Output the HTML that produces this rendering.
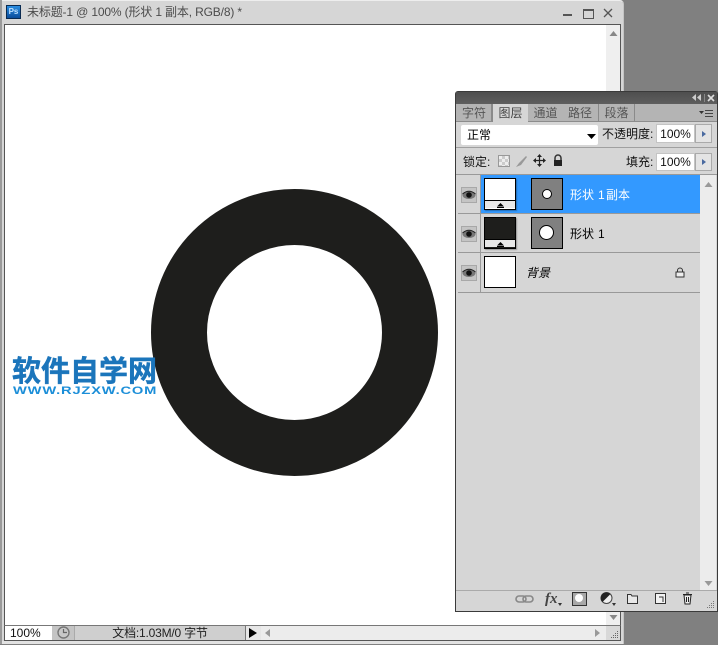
<!DOCTYPE html>
<html>
<head>
<meta charset="utf-8">
<style>
html,body{margin:0;padding:0;width:718px;height:645px;overflow:hidden;background:#808080;}
body{position:relative;font-family:"Liberation Sans","Noto Sans CJK SC",sans-serif;font-size:12px;color:#000;}
.a{position:absolute;white-space:nowrap;}
.sep{position:absolute;background:#a0a0a0;height:1px;}
.tab{position:absolute;top:104px;height:17px;background:#b4b4b4;border-right:1px solid #8a8a8a;color:#555;text-align:center;line-height:18px;font-size:12px;}
.eye{position:absolute;left:461px;width:14px;height:14px;border:1px solid #a8a8a8;background:#c4c4c4;}
.th{box-shadow:1px 1px 1px rgba(0,0,0,.3);}
</style>
</head>
<body>
<!-- Document window -->
<div class="a" style="left:0;top:0;width:624px;height:644px;background:#d6d6d6;border-top:1px solid #eee;border-right:1px solid #c4c4c4;border-radius:0 4px 0 0;box-sizing:border-box;"></div>
<div class="a" style="left:0;top:0;width:2px;height:644px;background:#9a9a9a;"></div>
<div class="a" style="left:2px;top:641px;width:621px;height:3px;background:#e2e2e2;"></div>
<!-- Title -->
<div class="a" style="left:6px;top:5px;width:15px;height:14px;background:linear-gradient(#2a8de0,#0b4d9c);border:1px solid #0a2a50;box-sizing:border-box;color:#bfe0ff;font-size:8px;font-weight:bold;line-height:12px;text-align:center;">Ps</div>
<div class="a" style="left:27px;top:4px;font-size:12px;line-height:16px;color:#4c4c4c;letter-spacing:-.15px;">未标题-1 @ 100% (形状 1 副本, RGB/8) *</div>
<div class="a" style="left:563px;top:14px;width:9px;height:2px;background:#555;"></div>
<div class="a" style="left:583px;top:9px;width:9px;height:7px;border:1px solid #555;border-top:2px solid #555;"></div>
<svg class="a" style="left:603px;top:8px;" width="10" height="10"><path d="M1 1L9 9M9 1L1 9" stroke="#555" stroke-width="1.3" fill="none"/></svg>
<!-- Canvas frame -->
<div class="a" style="left:4px;top:24px;width:617px;height:603px;background:#fff;border-top:1px solid #555;border-left:1px solid #555;border-right:1px solid #555;box-sizing:border-box;"></div>
<!-- scrollbar -->
<div class="a" style="left:606px;top:25px;width:14px;height:601px;background:#efefef;"></div>
<svg class="a" style="left:609px;top:31px;" width="9" height="6"><path d="M4.5 0L8.5 5H0.5Z" fill="#888"/></svg>
<svg class="a" style="left:609px;top:615px;" width="9" height="6"><path d="M0.5 0H8.5L4.5 5Z" fill="#888"/></svg>
<!-- Circle -->
<svg class="a" style="left:0;top:0;" width="620" height="626">
<circle cx="294.5" cy="332.5" r="115.5" fill="none" stroke="#1e1e1c" stroke-width="56"/>
</svg>
<!-- Watermark -->
<div class="a" style="left:12px;top:355px;font-size:29px;line-height:34px;font-weight:bold;color:#1b75bb;-webkit-text-stroke:.5px #1b75bb;">软件自学网</div>
<div class="a" style="left:13px;top:384px;font-size:11px;line-height:14px;font-weight:bold;color:#1b8ed8;letter-spacing:.6px;transform:scaleX(1.335);transform-origin:0 0;">WWW.RJZXW.COM</div>
<!-- Status bar -->
<div class="a" style="left:4px;top:625px;width:617px;height:16px;background:#d4d4d4;border-top:1px solid #777;border-bottom:1px solid #555;border-left:1px solid #555;border-right:1px solid #555;box-sizing:border-box;"></div>
<div class="a" style="left:5px;top:626px;width:47px;height:14px;background:#fff;font-size:12px;line-height:15px;color:#111;padding-left:5px;box-sizing:border-box;">100%</div>
<div class="a" style="left:52px;top:626px;width:22px;height:14px;background:#c4c4c4;"></div>
<svg class="a" style="left:57px;top:626px;" width="13" height="13"><circle cx="6.5" cy="6.5" r="5.5" fill="#c8c8c8" stroke="#777" stroke-width="1.4"/><path d="M6.5 3V6.5H10" fill="none" stroke="#666" stroke-width="1.2"/></svg>
<div class="a" style="left:74px;top:626px;width:172px;height:14px;background:#cfcfcf;border-left:1px solid #aaa;border-right:1px solid #777;box-sizing:border-box;text-align:center;line-height:15px;font-size:12px;color:#222;letter-spacing:-.2px;">文档:1.03M/0 字节</div>
<div class="a" style="left:246px;top:626px;width:15px;height:14px;background:#e6e6e6;"></div>
<svg class="a" style="left:249px;top:628px;" width="9" height="10"><path d="M0 0L8 5L0 10Z" fill="#000"/></svg>
<div class="a" style="left:261px;top:626px;width:345px;height:14px;background:#ececec;"></div>
<svg class="a" style="left:265px;top:629px;" width="6" height="8"><path d="M5 0V8L0 4Z" fill="#999"/></svg>
<svg class="a" style="left:595px;top:629px;" width="6" height="8"><path d="M0 0V8L5 4Z" fill="#999"/></svg>
<div class="a" style="left:606px;top:626px;width:14px;height:14px;background:#d8d8d8;"></div>
<svg class="a" style="left:610px;top:630px;" width="9" height="9" fill="#666"><rect x="7" y="1" width="1" height="1"/><rect x="5" y="3" width="1" height="1"/><rect x="7" y="3" width="1" height="1"/><rect x="3" y="5" width="1" height="1"/><rect x="5" y="5" width="1" height="1"/><rect x="7" y="5" width="1" height="1"/><rect x="1" y="7" width="1" height="1"/><rect x="3" y="7" width="1" height="1"/><rect x="5" y="7" width="1" height="1"/><rect x="7" y="7" width="1" height="1"/></svg>
<!-- Layers panel -->
<div class="a" style="left:455px;top:91px;width:263px;height:521px;background:#d6d6d6;border:1px solid #3a3a3a;border-radius:3px 3px 0 0;box-sizing:border-box;"></div>
<div class="a" style="left:456px;top:92px;width:261px;height:12px;background:linear-gradient(#4e4e4e,#5e5e5e);"></div>
<svg class="a" style="left:692px;top:94px;" width="26" height="9" fill="#ccc"><path d="M4 0V7L0 3.5ZM9 0V7L5 3.5Z"/><rect x="12" y="0" width="1" height="8" fill="#888"/><path d="M16 1L22 7M22 1L16 7" stroke="#ddd" stroke-width="1.6" fill="none"/></svg>
<div class="a" style="left:456px;top:104px;width:261px;height:18px;background:#b4b4b4;border-bottom:1px solid #8c8c8c;box-sizing:border-box;"></div>
<div class="tab" style="left:457px;width:34px;">字符</div>
<div class="tab" style="left:492px;width:35px;background:#d6d6d6;height:18px;border-right:none;border-left:1px solid #8a8a8a;color:#444;">图层</div>
<div class="tab" style="left:528px;width:33px;padding-left:1px;">通道</div>
<div class="tab" style="left:562px;width:36px;">路径</div>
<div class="tab" style="left:599px;width:35px;">段落</div>
<svg class="a" style="left:699px;top:109px;" width="15" height="10"><path d="M0 2H5L2.5 5Z" fill="#333"/><path d="M6 1.5H14M6 4.5H14M6 7.5H14" stroke="#444" stroke-width="1"/></svg>
<!-- blend row -->
<div class="a" style="left:461px;top:125px;width:137px;height:20px;background:#fff;border-radius:2px;font-size:12px;line-height:21px;padding-left:6px;box-sizing:border-box;">正常</div>
<svg class="a" style="left:587px;top:134px;" width="9" height="5"><path d="M0 0H9L4.5 5Z" fill="#000"/></svg>
<div class="a" style="left:602px;top:126px;font-size:12px;line-height:16px;color:#111;">不透明度:</div>
<div class="a" style="left:656px;top:124px;width:39px;height:19px;background:#fff;border:1px solid #c4c4c4;box-sizing:border-box;text-align:center;line-height:18px;font-size:12px;color:#111;">100%</div>
<div class="a" style="left:695px;top:124px;width:17px;height:19px;background:#e4e4e4;border:1px solid #aaa;box-sizing:border-box;"></div>
<svg class="a" style="left:702px;top:131px;" width="4" height="6"><path d="M0 0L4 3L0 6Z" fill="#4a6aa0"/></svg>
<div class="sep" style="left:456px;top:147px;width:261px;"></div>
<!-- lock row -->
<div class="a" style="left:463px;top:154px;font-size:12px;line-height:16px;color:#111;">锁定:</div>
<div class="a" style="left:498px;top:155px;width:10px;height:10px;border:1px solid #999;background:repeating-conic-gradient(#ccc 0 25%,#eee 0 50%) 0 0/6px 6px;"></div>
<svg class="a" style="left:515px;top:154px;" width="14" height="14"><path d="M1 13L4 9L11 2L12 3L6 11Z" fill="#999"/></svg>
<svg class="a" style="left:533px;top:154px;" width="13" height="13"><path d="M6.5 1V12M1 6.5H12" stroke="#222" stroke-width="1.2"/><path d="M6.5 0L9 3H4ZM6.5 13L9 10H4ZM0 6.5L3 4V9ZM13 6.5L10 4V9Z" fill="#222"/></svg>
<svg class="a" style="left:552px;top:154px;" width="12" height="13"><path d="M3 6V4a3 3 0 0 1 6 0V6" fill="none" stroke="#333" stroke-width="1.5"/><rect x="2" y="6" width="8" height="6" fill="#222"/></svg>
<div class="a" style="left:626px;top:154px;font-size:12px;line-height:16px;color:#111;">填充:</div>
<div class="a" style="left:656px;top:153px;width:39px;height:18px;background:#fff;border:1px solid #c4c4c4;box-sizing:border-box;text-align:center;line-height:17px;font-size:12px;color:#111;">100%</div>
<div class="a" style="left:695px;top:153px;width:17px;height:18px;background:#e4e4e4;border:1px solid #aaa;box-sizing:border-box;"></div>
<svg class="a" style="left:702px;top:159px;" width="4" height="6"><path d="M0 0L4 3L0 6Z" fill="#4a6aa0"/></svg>
<div class="sep" style="left:456px;top:174px;width:261px;background:#999;"></div>
<!-- Layer list -->
<div class="a" style="left:481px;top:175px;width:219px;height:38px;background:#3399ff;"></div>
<div class="sep" style="left:458px;top:213px;width:242px;background:#999;"></div>
<div class="sep" style="left:458px;top:252px;width:242px;background:#999;"></div>
<div class="sep" style="left:458px;top:292px;width:242px;background:#999;"></div>
<div class="a" style="left:480px;top:175px;width:1px;height:118px;background:#999;"></div>
<div class="a" style="left:700px;top:175px;width:16px;height:415px;background:#ececec;"></div>
<svg class="a" style="left:704px;top:182px;" width="9" height="5"><path d="M4.5 0L8.5 5H0.5Z" fill="#999"/></svg>
<svg class="a" style="left:704px;top:581px;" width="9" height="5"><path d="M0.5 0H8.5L4.5 5Z" fill="#999"/></svg>
<!-- eyes -->
<div class="eye" style="top:187px;"></div>
<div class="eye" style="top:226px;"></div>
<div class="eye" style="top:265px;"></div>
<svg class="a" style="left:461px;top:187px;" width="16" height="16"><ellipse cx="8" cy="8" rx="6.5" ry="4" fill="#777"/><path d="M1.5 7Q8 1.5 14.5 7" fill="none" stroke="#222"/><circle cx="8" cy="8" r="2.8" fill="#111"/></svg>
<svg class="a" style="left:461px;top:226px;" width="16" height="16"><ellipse cx="8" cy="8" rx="6.5" ry="4" fill="#777"/><path d="M1.5 7Q8 1.5 14.5 7" fill="none" stroke="#222"/><circle cx="8" cy="8" r="2.8" fill="#111"/></svg>
<svg class="a" style="left:461px;top:265px;" width="16" height="16"><ellipse cx="8" cy="8" rx="6.5" ry="4" fill="#777"/><path d="M1.5 7Q8 1.5 14.5 7" fill="none" stroke="#222"/><circle cx="8" cy="8" r="2.8" fill="#111"/></svg>
<!-- Layer 1 thumbs -->
<div class="a th" style="left:484px;top:178px;width:30px;height:30px;background:#fff;border:1px solid #000;"></div>
<div class="a" style="left:485px;top:200px;width:30px;height:1px;background:#000;"></div>
<div class="a" style="left:485px;top:201px;width:30px;height:7px;background:#e8e8e8;"></div>
<svg class="a" style="left:497px;top:203px;" width="7" height="5"><path d="M3.5 0L7 3.5H0Z" fill="#000"/><rect x="0" y="4" width="7" height="1" fill="#000"/></svg>
<div class="a" style="left:531px;top:178px;width:30px;height:30px;background:#808080;border:1px solid #000;"></div>
<div class="a" style="left:542px;top:189px;width:8px;height:8px;background:#fff;border-radius:50%;border:1px solid #000;"></div>
<div class="a" style="left:570px;top:187px;font-size:12px;line-height:16px;color:#fff;">形状</div>
<div class="a" style="left:598px;top:187px;font-size:12px;line-height:16px;color:#fff;">1</div>
<div class="a" style="left:606px;top:187px;font-size:12px;line-height:16px;color:#fff;">副本</div>
<!-- Layer 2 thumbs -->
<div class="a th" style="left:484px;top:217px;width:30px;height:30px;background:#1e1e1c;border:1px solid #000;"></div>
<div class="a" style="left:485px;top:239px;width:30px;height:1px;background:#000;"></div>
<div class="a" style="left:485px;top:240px;width:30px;height:7px;background:#e8e8e8;"></div>
<svg class="a" style="left:497px;top:242px;" width="7" height="5"><path d="M3.5 0L7 3.5H0Z" fill="#000"/><rect x="0" y="4" width="7" height="1" fill="#000"/></svg>
<div class="a" style="left:531px;top:217px;width:30px;height:30px;background:#808080;border:1px solid #000;"></div>
<div class="a" style="left:539px;top:225px;width:13px;height:13px;background:#fff;border-radius:50%;border:1px solid #000;"></div>
<div class="a" style="left:570px;top:226px;font-size:12px;line-height:16px;color:#000;">形状</div>
<div class="a" style="left:598px;top:226px;font-size:12px;line-height:16px;color:#000;">1</div>
<!-- Background layer -->
<div class="a" style="left:484px;top:256px;width:30px;height:30px;background:#fff;border:1px solid #000;"></div>
<div class="a" style="left:526px;top:265px;font-size:12px;line-height:16px;font-style:italic;color:#000;">背景</div>
<svg class="a" style="left:675px;top:267px;" width="10" height="11"><path d="M2.5 5V3.5a2.5 2.5 0 0 1 5 0V5" fill="none" stroke="#333"/><rect x="1" y="5" width="8" height="5" fill="#eee" stroke="#333"/></svg>
<!-- Bottom bar -->
<div class="sep" style="left:456px;top:590px;width:261px;background:#aaa;"></div>
<svg class="a" style="left:515px;top:594px;" width="20" height="10"><rect x="1" y="2" width="10" height="6" rx="3" fill="none" stroke="#888" stroke-width="1.6"/><rect x="8" y="2" width="10" height="6" rx="3" fill="none" stroke="#888" stroke-width="1.6"/></svg>
<div class="a" style="left:545px;top:590px;font-family:'Liberation Serif',serif;font-style:italic;font-weight:bold;font-size:15px;line-height:18px;color:#444;">fx</div>
<div class="a" style="left:558px;top:603px;width:0;height:0;border:2px solid transparent;border-top:3px solid #333;"></div>
<div class="a" style="left:572px;top:592px;width:13px;height:12px;background:#a8a8a8;border:1px solid #333;"></div>
<div class="a" style="left:575px;top:594px;width:8px;height:8px;background:#fff;border-radius:50%;"></div>
<svg class="a" style="left:600px;top:591px;" width="14" height="14"><circle cx="6.5" cy="7" r="5.5" fill="#eee" stroke="#444"/><path d="M6.5 1.5A5.5 5.5 0 0 0 2.5 11L10.5 3A5.5 5.5 0 0 0 6.5 1.5Z" fill="#222"/></svg>
<div class="a" style="left:612px;top:603px;width:0;height:0;border:2px solid transparent;border-top:3px solid #333;"></div>
<svg class="a" style="left:627px;top:593px;" width="12" height="11"><path d="M0.5 10.5V1.5H4L5 3H10.5V10.5Z" fill="#e8e8e8" stroke="#333"/></svg>
<svg class="a" style="left:655px;top:593px;" width="11" height="11"><path d="M0.5 0.5H10.5V10.5H0.5Z" fill="#f2f2f2" stroke="#333"/><path d="M4 4H8V9" fill="none" stroke="#333"/></svg>
<svg class="a" style="left:682px;top:592px;" width="11" height="13"><path d="M2 3H9L8 12H3Z" fill="#eee" stroke="#222"/><path d="M1 2.5H10M4 1H7" stroke="#222"/><path d="M4.5 5V10M6.5 5V10" stroke="#222"/></svg>
<svg class="a" style="left:706px;top:600px;" width="9" height="9" fill="#777"><rect x="7" y="1" width="1" height="1"/><rect x="5" y="3" width="1" height="1"/><rect x="7" y="3" width="1" height="1"/><rect x="3" y="5" width="1" height="1"/><rect x="5" y="5" width="1" height="1"/><rect x="7" y="5" width="1" height="1"/><rect x="1" y="7" width="1" height="1"/><rect x="3" y="7" width="1" height="1"/><rect x="5" y="7" width="1" height="1"/><rect x="7" y="7" width="1" height="1"/></svg>
</body>
</html>
